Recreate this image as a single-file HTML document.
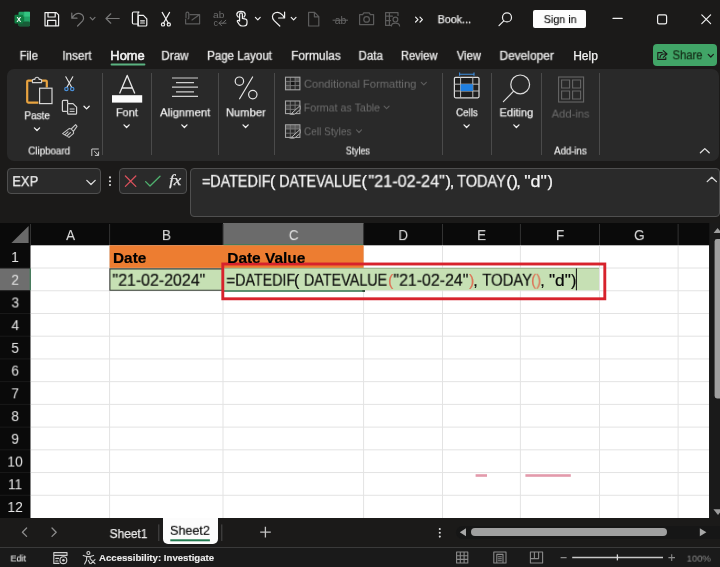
<!DOCTYPE html>
<html lang="en"><head><meta charset="utf-8"><title>Book1 - Excel</title>
<style>
html,body{margin:0;padding:0;background:#1b1a19;}
#app{position:relative;width:720px;height:567px;overflow:hidden;background:#1b1a19;font-family:"Liberation Sans",sans-serif;}
#app div,#app section,#app header,#app footer,#app nav{position:absolute;box-sizing:border-box;}
.t{position:absolute;white-space:pre;line-height:1;transform-origin:0 0;will-change:transform;}
svg{position:absolute;left:0;top:0;overflow:visible;will-change:transform;}
.w{fill:none;stroke:#f0f0f0;stroke-width:1.2;stroke-linecap:round;stroke-linejoin:round;}
.g{fill:none;stroke:#777;stroke-width:1.2;stroke-linecap:round;stroke-linejoin:round;}
.d{fill:none;stroke:#5c5c5c;stroke-width:1.2;stroke-linecap:round;stroke-linejoin:round;}
.sep{background:#4a4a4a;width:1px;top:73px;height:82px;}
</style></head>
<body><div id="app">

<header style="left:0;top:0;width:720px;height:69px;background:#1b1a19">
<svg width="720" height="69" viewBox="0 0 720 69">
 <rect x="18.5" y="11.8" width="11.5" height="14.4" rx="1.3" fill="#21a366"/>
 <rect x="24.2" y="11.8" width="5.8" height="4.8" fill="#33c481"/>
 <rect x="18.5" y="16.6" width="5.7" height="4.8" fill="#107c41"/>
 <rect x="18.5" y="21.4" width="11.5" height="4.8" rx="1.3" fill="#185c37"/>
 <rect x="14.5" y="14.8" width="8.6" height="8.6" rx="1" fill="#107c41"/>
 <text x="18.8" y="22" font-family="Liberation Sans, sans-serif" font-size="7" font-weight="700" fill="#fff" text-anchor="middle">X</text>
 <path class="w" d="M45 12.6 H56.3 L58.6 14.9 V25.8 H45 Z"/>
 <path class="w" d="M48 12.8 V17 H55.2 V12.8 M47.6 25.6 V20.4 H55.8 V25.6"/>
 <path class="g" d="M71.8 13 V18.2 H77 M72 18 C74 14.8 77.2 13 80 13.6 C83.4 14.4 84.6 18 82.6 20.8 L77.6 26"/>
 <path class="g" style="stroke-width:1.2" d="M90.20 17.40 L92.60 19.80 L95.00 17.40"/>
 <path class="g" d="M119.2 18.5 H106.2 M110.8 13.8 L106 18.5 L110.8 23.2"/>
 <path class="w" d="M137.4 24 H133.6 Q132.4 24 132.4 22.8 V13.2 Q132.4 12 133.6 12 H138.6"/>
 <path class="w" d="M138 26 V13 Q138 12 139 12 V12"/>
 <path class="w" d="M139 15.4 H143.4 L146.8 18.8 V25 Q146.8 26 145.8 26 H139.4 Q138.2 26 138.2 25 V16.4 Q138.2 15.4 139 15.4 Z" fill="#1b1a19"/>
 <path class="w" d="M140.6 20.8 H144.4 M140.6 23 H144.4"/>
 <path class="w" d="M162.2 12.4 L168.2 23 M169.6 12.4 L163.6 23"/>
 <circle class="w" cx="163" cy="24.4" r="1.6"/><circle class="w" cx="168.8" cy="24.4" r="1.6"/>
 <path class="d" d="M190 14.6 H199.6 V23.8 H185.6 V19.4 M192 20 L199.4 14.8"/>
 <path class="d" d="M186 17.8 V13.6 Q186 12.2 187.4 12.2 Q188.8 12.2 188.8 13.6 V18 Q188.8 18.8 188 18.8"/>
 <text x="213" y="18.4" font-family="Liberation Sans, sans-serif" font-size="9" fill="#6c6c6c" textLength="11.4" lengthAdjust="spacingAndGlyphs">ab</text>
 <text x="213.4" y="26" font-family="Liberation Sans, sans-serif" font-size="9" fill="#6c6c6c">c</text>
 <path class="d" style="stroke:#6c6c6c;stroke-width:1" d="M225.8 20.2 L222.6 23.2 H226 M222.6 23.2 H219 M221.6 20.8 L219 23.2 L221.6 25.8"/>
 <path class="w" d="M239.6 21 V14.4 Q239.6 12.8 241 12.8 Q242.4 12.8 242.4 14.4 V18.4 L245.6 19.2 Q247 19.6 247 21 V23 Q247 26 244 26 H242 Q240.4 26 239.4 24.6 L237.4 21.6 Q237 20.6 238 20.4 Q238.8 20.2 239.6 21"/>
 <path class="w" d="M238.2 17 Q236.6 15.6 236.8 14 Q237.4 11.4 241 11.4 Q244.6 11.4 245.2 14 Q245.4 15.6 244 17"/>
 <path class="w" style="stroke-width:1.2" d="M255.40 17.40 L257.80 19.80 L260.20 17.40"/>
 <path class="w" d="M284.6 12 V18 H278.6 M284.4 17.8 C282.4 13.6 278.4 11.6 275.2 12.8 C271.8 14.2 271.6 18 274.2 20.6 L279.8 26"/>
 <path class="w" style="stroke-width:1.2" d="M291.20 17.40 L293.60 19.80 L296.00 17.40"/>
 <path class="d" d="M308.6 12.4 H314.6 L318.8 16.6 V26 H308.6 Z M314.4 12.6 V16.8 H318.6"/>
 <text x="334.8" y="23.6" font-family="Liberation Sans, sans-serif" font-size="10.4" fill="#666">ab</text>
 <path class="d" style="stroke:#666;stroke-width:1" d="M333 20.2 H347.6"/>
 <path class="d" d="M359.6 14.6 H362.6 L363.8 12.8 H369.2 L370.4 14.6 H373.6 V24.6 H359.6 Z"/>
 <circle class="d" cx="366.6" cy="19.4" r="2.8"/>
 <path class="d" d="M385.6 12.6 H398 V15.4 M385.6 12.6 V25.4 H390.6 M385.6 16.2 H392.4 M385.6 20.6 H390.6 M389.4 12.6 V25.4"/>
 <circle class="d" cx="395.4" cy="19.6" r="2.4"/>
 <path class="d" d="M391.4 26 Q391.6 23.2 395.4 23.2 Q399.2 23.2 399.6 26"/>
 <path class="w" d="M415.6 17.2 L418 19.6 L415.6 22 M420 17.2 L422.4 19.6 L420 22"/>
 <circle class="w" cx="507" cy="17.4" r="4.5"/>
 <path class="w" d="M503.8 20.8 L499 25.6"/>
 <path class="w" d="M613 18.4 H622.2"/>
 <rect class="w" x="657.6" y="14.8" width="9" height="9" rx="1.6"/>
 <path class="w" d="M701.8 14.8 L710.6 23.6 M710.6 14.8 L701.8 23.6"/>
</svg>
<span class="t" style="left:437px;top:14px;font-size:11.3px;color:#ededed;-webkit-text-stroke:0.25px currentColor;transform:translate(0.73px,0.10px) scaleX(0.9459);">Book...</span>
<div style="left:533px;top:10px;width:53px;height:18px;background:#fdfdfd;border-radius:2px"></div>
<span class="t" style="left:543px;top:14px;font-size:11.5px;color:#050505;-webkit-text-stroke:0.1px currentColor;transform:translate(0.73px,0.10px) scaleX(0.9353);">Sign in</span>
<nav style="left:0;top:40px;width:720px;height:29px">

<div style="left:653px;top:3.6px;width:64px;height:22px;background:#41a567;border-radius:4px"></div>
</nav>
<span class="t" style="left:19px;top:49px;font-size:12px;color:#f2f2f2;-webkit-text-stroke:0.25px currentColor;transform:translate(0.63px,0.80px) scaleX(0.9437);">File</span><span class="t" style="left:62px;top:49px;font-size:12px;color:#f2f2f2;-webkit-text-stroke:0.25px currentColor;transform:translate(0.30px,0.80px) scaleX(0.9741);">Insert</span><span class="t" style="left:110px;top:49px;font-size:12px;color:#f2f2f2;-webkit-text-stroke:0.55px currentColor;transform:translate(0.35px,0.80px) scaleX(1.0705);">Home</span><span class="t" style="left:161px;top:49px;font-size:12px;color:#f2f2f2;-webkit-text-stroke:0.25px currentColor;transform:translate(0.30px,0.80px) scaleX(0.9722);">Draw</span><span class="t" style="left:207px;top:49px;font-size:12px;color:#f2f2f2;-webkit-text-stroke:0.25px currentColor;transform:translate(0.11px,0.80px) scaleX(0.9608);">Page Layout</span><span class="t" style="left:291px;top:49px;font-size:12px;color:#f2f2f2;-webkit-text-stroke:0.25px currentColor;transform:translate(0.18px,0.80px) scaleX(0.9907);">Formulas</span><span class="t" style="left:358px;top:49px;font-size:12px;color:#f2f2f2;-webkit-text-stroke:0.25px currentColor;transform:translate(0.52px,0.80px) scaleX(0.9571);">Data</span><span class="t" style="left:400px;top:49px;font-size:12px;color:#f2f2f2;-webkit-text-stroke:0.25px currentColor;transform:translate(0.95px,0.80px) scaleX(0.9268);">Review</span><span class="t" style="left:456px;top:49px;font-size:12px;color:#f2f2f2;-webkit-text-stroke:0.25px currentColor;transform:translate(0.78px,0.80px) scaleX(0.9340);">View</span><span class="t" style="left:499px;top:49px;font-size:12px;color:#f2f2f2;-webkit-text-stroke:0.25px currentColor;transform:translate(0.48px,0.80px) scaleX(0.9953);">Developer</span><span class="t" style="left:573px;top:49px;font-size:12px;color:#f2f2f2;-webkit-text-stroke:0.25px currentColor;transform:translate(0.17px,0.80px) scaleX(1.0043);">Help</span>
<span class="t" style="left:672px;top:48px;font-size:13px;color:#10200f;-webkit-text-stroke:0.1px currentColor;transform:translate(0.55px,0.30px) scaleX(0.8602);">Share</span>
<svg width="720" height="69" viewBox="0 0 720 69"><rect x="110.6" y="63.5" width="34.8" height="1.9" rx="0.9" fill="#5bb381"/><path d="M708.2 54.4 L710.8 57 L713.4 54.4" fill="none" stroke="#1b1a19" stroke-width="1.2" stroke-linecap="round" stroke-linejoin="round"/>
 <path d="M663.2 50.6 L667 54 L663.2 57.4 M667 54 H664 Q660.4 54 660 57.6 M662.2 52.6 H657.8 V59.4 H665.8 V57.6" fill="none" stroke="#1b1a19" stroke-width="1.1" stroke-linejoin="round" stroke-linecap="round"/></svg>
</header>


<section style="left:7px;top:69px;width:712px;height:92px;background:#292929;border-radius:7px"></section>
<section style="left:0;top:69px;width:720px;height:92px">
<div class="sep" style="left:102px;top:4px"></div><div class="sep" style="left:151px;top:4px"></div><div class="sep" style="left:218px;top:4px"></div><div class="sep" style="left:274px;top:4px"></div><div class="sep" style="left:442px;top:4px"></div><div class="sep" style="left:491px;top:4px"></div><div class="sep" style="left:541px;top:4px"></div><div class="sep" style="left:599px;top:4px"></div>
<svg width="720" height="92" viewBox="0 69 720 92">
 <path d="M33.4 80.6 H28.2 Q27.2 80.6 27.2 81.6 V101.6 Q27.2 102.6 28.2 102.6 H38.4" fill="none" stroke="#e9a440" stroke-width="2.2" stroke-linejoin="round"/>
 <path d="M40.6 80.6 H45.8 Q46.8 80.6 46.8 81.6 V87.4" fill="none" stroke="#e9a440" stroke-width="2.2" stroke-linejoin="round"/>
 <path d="M32.4 82.6 V80.4 Q32.4 79.4 33.4 79.4 H34.8 Q35 77.2 37 77.2 Q39 77.2 39.2 79.4 H40.6 Q41.6 79.4 41.6 80.4 V82.6 Z" fill="#292929" stroke="#d0d0d0" stroke-width="1.1" stroke-linejoin="round"/>
 <rect x="39.6" y="88.2" width="12.4" height="15.4" fill="#292929" stroke="#d8d8d8" stroke-width="1.2"/>
 <path class="w" style="stroke-width:1.3" d="M34.40 127.90 L37.00 130.50 L39.60 127.90"/>
 <path d="M65.8 76.8 L71.8 87.6 M72.8 76.8 L66.8 87.6" fill="none" stroke="#e6e6e6" stroke-width="1.1" stroke-linecap="round"/>
 <circle cx="66.4" cy="89" r="1.7" fill="none" stroke="#4a90d9" stroke-width="1.2"/><circle cx="72.2" cy="89" r="1.7" fill="none" stroke="#4a90d9" stroke-width="1.2"/>
 <path class="w" style="stroke:#d4d4d4" d="M66.4 111.4 H63.4 Q62.4 111.4 62.4 110.4 V101.4 Q62.4 100.4 63.4 100.4 H67.6 V103"/>
 <path class="w" style="stroke:#d4d4d4" d="M68.2 103.6 H73 L76.6 107.2 V113.2 Q76.6 114.2 75.6 114.2 H68.6 Q67.6 114.2 67.6 113.2 V104.2 Q67.6 103.6 68.2 103.6 Z"/>
 <path class="w" style="stroke:#d4d4d4;stroke-width:1" d="M70 109 H74.2 M70 111.4 H74.2"/>
 <path class="w" style="stroke-width:1.3" d="M84.00 106.30 L86.60 108.90 L89.20 106.30"/>
 <path class="w" style="stroke:#c4c4c4;stroke-width:1.1" d="M75.6 124.6 L71.2 129 L73.4 131.4 L77 126.4 Z M71.2 129 L69.4 128.4 L62.6 133.6 L69 137.4 L73.6 133.4 L73.4 131.4 M64.8 134.8 L68 131.8 M66.8 136 L70.4 132.6"/>
 <path class="w" style="stroke:#c8c8c8;stroke-width:1" d="M98.4 149 H91.8 V155.6 M94.4 151.2 L98.4 155.2 M98.6 152 V155.4 H95.2"/>
 <path d="M119.6 93.6 L127.2 75.4 L134.8 93.6 M122.2 88 H132.2" fill="none" stroke="#e8e8e8" stroke-width="1.3" stroke-linejoin="round"/>
 <rect x="112" y="95.2" width="30.2" height="7.4" fill="#fbfbfb"/>
 <path class="w" style="stroke-width:1.3" d="M124.00 124.90 L126.60 127.50 L129.20 124.90"/>
 <path d="M172 78 H198 M176 82.6 H194 M172 87.2 H198 M176 91.8 H194 M172 96.4 H198" fill="none" stroke="#d0d0d0" stroke-width="1.2"/>
 <path class="w" style="stroke-width:1.3" d="M181.80 124.90 L184.40 127.50 L187.00 124.90"/>
 <circle cx="239.4" cy="81.2" r="4.2" fill="none" stroke="#e4e4e4" stroke-width="1.2"/>
 <circle cx="252.8" cy="94.6" r="4.2" fill="none" stroke="#e4e4e4" stroke-width="1.2"/>
 <path d="M252.6 77 L239.6 98.8" fill="none" stroke="#e4e4e4" stroke-width="1.2" stroke-linecap="round"/>
 <path class="w" style="stroke-width:1.3" d="M243.00 124.90 L245.60 127.50 L248.20 124.90"/>
 <rect x="290.3" y="81.4" width="4.8" height="4.2" fill="#141414"/><rect x="295.1" y="77.2" width="4.8" height="4.2" fill="#505050"/><rect x="285.5" y="85.60000000000001" width="4.8" height="4.2" fill="#484848"/><rect x="285.5" y="81.4" width="4.8" height="4.2" fill="#3c3c3c"/><path d="M285.5 81.4 H299.9 M285.5 85.60000000000001 H299.9 M290.3 77.2 V89.8 M295.1 77.2 V89.8" fill="none" stroke="#7c7c7c" stroke-width="0.9"/><rect x="285.5" y="77.2" width="14.4" height="12.6" fill="none" stroke="#a4a4a4" stroke-width="1.1"/><rect x="285.5" y="105.2" width="4.8" height="4.2" fill="#444"/><path d="M285.5 105.2 H299.9 M285.5 109.4 H299.9 M290.3 101 V113.6 M295.1 101 V113.6" fill="none" stroke="#7c7c7c" stroke-width="0.9"/><rect x="285.5" y="101" width="14.4" height="12.6" fill="none" stroke="#a4a4a4" stroke-width="1.1"/><path d="M290.9 114.0 L300.1 105.6 L300.1 109.6 L294.9 114.0 Z" fill="#2e2e2e" stroke="#b4b4b4" stroke-width="1" stroke-linejoin="round"/><path d="M289.1 114.8 L294.3 114.8 L292.7 112.39999999999999 Z" fill="#a8a8a8"/><rect x="286.0" y="125.3" width="13.4" height="3.7" fill="#5a5a5a"/><path d="M285.5 129.0 H299.9 M285.5 133.2 H299.9 M290.3 124.8 V137.4 M295.1 124.8 V137.4" fill="none" stroke="#7c7c7c" stroke-width="0.9"/><rect x="285.5" y="124.8" width="14.4" height="12.6" fill="none" stroke="#a4a4a4" stroke-width="1.1"/><path d="M290.9 137.8 L300.1 129.4 L300.1 133.4 L294.9 137.8 Z" fill="#2e2e2e" stroke="#b4b4b4" stroke-width="1" stroke-linejoin="round"/><path d="M289.1 138.6 L294.3 138.6 L292.7 136.20000000000002 Z" fill="#a8a8a8"/>
 <path class="d" style="stroke-width:1.2" d="M421.30 82.30 L423.80 84.90 L426.30 82.30"/><path class="d" style="stroke-width:1.2" d="M384.10 106.10 L386.60 108.70 L389.10 106.10"/><path class="d" style="stroke-width:1.2" d="M356.50 129.90 L359.00 132.50 L361.50 129.90"/>
 <path d="M459.6 72.6 V75.8 M474 72.6 V75.8 M459.6 74.2 H474" fill="none" stroke="#3d8ee0" stroke-width="1.1"/>
 <rect x="454.4" y="77.4" width="24.6" height="20.4" rx="1.2" fill="#1e1e1e" stroke="#dcdcdc" stroke-width="1.2"/>
 <path d="M454.4 84.2 H479 M454.4 91 H479 M460.6 77.4 V97.8 M472.8 77.4 V97.8" fill="none" stroke="#bdbdbd" stroke-width="1"/>
 <rect x="460.6" y="84.2" width="12.2" height="6.8" fill="#1f7fe0"/>
 <path class="w" style="stroke-width:1.3" d="M464.00 124.90 L466.60 127.50 L469.20 124.90"/>
 <circle cx="520.2" cy="84.4" r="9.4" fill="none" stroke="#dcdcdc" stroke-width="1.2"/>
 <path d="M513.4 91.4 L503.4 101.6" fill="none" stroke="#dcdcdc" stroke-width="1.2" stroke-linecap="round"/>
 <path class="w" style="stroke-width:1.3" d="M513.80 124.90 L516.40 127.50 L519.00 124.90"/>
 <rect x="558.6" y="77" width="25" height="25" fill="none" stroke="#666" stroke-width="1.1"/>
 <path d="M561.6 80 H569.6 V88 H561.6 Z M572.6 80 H580.6 V88 H572.6 Z M561.6 91 H569.6 V99 H561.6 Z M572.6 91 H580.6 V99 H572.6 Z" fill="none" stroke="#666" stroke-width="1.1"/>
 <path class="w" style="stroke:#e0e0e0;stroke-width:1.3" d="M700.4 152.8 L704.8 148.6 L709.2 152.8"/>
</svg>
<span class="t" style="left:24px;top:40px;font-size:11.6px;color:#f2f2f2;-webkit-text-stroke:0.25px currentColor;transform:translate(0.42px,0.20px) scaleX(0.8584);">Paste</span>
<span class="t" style="left:28px;top:77px;font-size:10px;color:#f2f2f2;-webkit-text-stroke:0.15px currentColor;transform:translate(0.24px,0.50px) scaleX(0.9760);">Clipboard</span>
<span class="t" style="left:115px;top:37px;font-size:11.6px;color:#f2f2f2;-webkit-text-stroke:0.25px currentColor;transform:translate(0.93px,0.20px) scaleX(0.9416);">Font</span>
<span class="t" style="left:160px;top:37px;font-size:11.6px;color:#f2f2f2;-webkit-text-stroke:0.25px currentColor;transform:translate(0.07px,0.20px) scaleX(0.9718);">Alignment</span>
<span class="t" style="left:225px;top:37px;font-size:11.6px;color:#f2f2f2;-webkit-text-stroke:0.25px currentColor;transform:translate(0.91px,0.20px) scaleX(0.9662);">Number</span>
<span class="t" style="left:303px;top:9px;font-size:11.5px;color:#6e6e6e;transform:translate(0.86px,0.70px) scaleX(0.9721);">Conditional Formatting</span>
<span class="t" style="left:303px;top:33px;font-size:11.5px;color:#6e6e6e;transform:translate(0.72px,0.50px) scaleX(0.9288);">Format as Table</span>
<span class="t" style="left:303px;top:57px;font-size:11.5px;color:#6e6e6e;transform:translate(0.91px,0.30px) scaleX(0.8766);">Cell Styles</span>
<span class="t" style="left:345px;top:77px;font-size:10px;color:#f2f2f2;-webkit-text-stroke:0.15px currentColor;transform:translate(0.78px,0.50px) scaleX(0.8811);">Styles</span>
<span class="t" style="left:456px;top:37px;font-size:11.6px;color:#f2f2f2;-webkit-text-stroke:0.25px currentColor;transform:translate(0.05px,0.20px) scaleX(0.8420);">Cells</span>
<span class="t" style="left:499px;top:37px;font-size:11.6px;color:#f2f2f2;-webkit-text-stroke:0.25px currentColor;transform:translate(0.53px,0.20px) scaleX(0.9496);">Editing</span>
<span class="t" style="left:551px;top:38px;font-size:11.6px;color:#6a6a6a;transform:translate(0.65px,0.60px) scaleX(0.9641);">Add-ins</span>
<span class="t" style="left:554px;top:77px;font-size:10px;color:#f2f2f2;-webkit-text-stroke:0.15px currentColor;transform:translate(0.13px,0.50px) scaleX(0.9597);">Add-ins</span>
</section>


<section style="left:0;top:161px;width:720px;height:62px;background:#1b1a19">
<div style="left:7px;top:7px;width:94px;height:26.4px;background:#2a2a2a;border:1px solid #4f4f4f;border-radius:4px"></div>
<div style="left:119px;top:7px;width:68px;height:26.4px;background:#2a2a2a;border:1px solid #4f4f4f;border-radius:4px"></div>
<div style="left:190px;top:7px;width:529.5px;height:49px;background:#2a2a2a;border:1px solid #4f4f4f;border-radius:4px"></div>
<svg width="720" height="62" viewBox="0 161 720 62">
 <path class="w" style="stroke:#dcdcdc;stroke-width:1.3" d="M86.8 180.4 L91 184.5 L95.2 180.4"/>
 <circle cx="110" cy="177.4" r="1.05" fill="#dcdcdc"/><circle cx="110" cy="181.2" r="1.05" fill="#dcdcdc"/><circle cx="110" cy="185" r="1.05" fill="#dcdcdc"/>
 <path d="M125.4 176 L135.8 186.4 M135.8 176 L125.4 186.4" fill="none" stroke="#d9515c" stroke-width="1.3" stroke-linecap="round"/>
 <path d="M145.6 181.6 L150 186 L160 176.2" fill="none" stroke="#4fb06e" stroke-width="1.3" stroke-linecap="round" stroke-linejoin="round"/>
 <path class="w" style="stroke:#dcdcdc;stroke-width:1.3" d="M707.2 181.6 L711.8 177.2 L716.4 181.6"/>
</svg>
<span class="t" style="left:12px;top:13px;font-size:14.8px;color:#f2f2f2;-webkit-text-stroke:0.25px currentColor;transform:translate(0.28px,0.10px) scaleX(0.8782);">EXP</span>
<span class="t" style="left:169px;top:11px;font-size:15.5px;color:#e6e6e6;font-style:italic;font-family:'Liberation Serif', serif;-webkit-text-stroke:0.25px currentColor;transform:translate(0.20px,0.40px) scaleX(1.0837);">fx</span>
<span class="t" style="left:201px;top:11px;font-size:16.3px;color:#f4f4f4;-webkit-text-stroke:0.25px currentColor;transform:translate(0.95px,0.80px) scaleX(0.9062);">=</span><span class="t" style="left:210px;top:11px;font-size:16.3px;color:#f4f4f4;-webkit-text-stroke:0.25px currentColor;transform:translate(0.22px,0.80px) scaleX(0.8820);">DATEDIF</span><span class="t" style="left:270px;top:11px;font-size:16.3px;color:#f4f4f4;-webkit-text-stroke:0.25px currentColor;transform:translate(0.02px,0.80px) scaleX(1.0000);">( </span><span class="t" style="left:279px;top:11px;font-size:16.3px;color:#f4f4f4;-webkit-text-stroke:0.25px currentColor;transform:translate(0.24px,0.80px) scaleX(0.8719);">DATEVALUE</span><span class="t" style="left:361px;top:11px;font-size:16.3px;color:#f4f4f4;-webkit-text-stroke:0.25px currentColor;transform:translate(0.48px,0.80px) scaleX(1.0000);">(</span><span class="t" style="left:368px;top:11px;font-size:16.3px;color:#f4f4f4;-webkit-text-stroke:0.25px currentColor;transform:translate(0.48px,0.80px) scaleX(0.9960);">"21-02-24"</span><span class="t" style="left:445px;top:11px;font-size:16.3px;color:#f4f4f4;-webkit-text-stroke:0.25px currentColor;transform:translate(0.38px,0.80px) scaleX(1.0000);">)</span><span class="t" style="left:449px;top:11px;font-size:16.3px;color:#f4f4f4;-webkit-text-stroke:0.25px currentColor;transform:translate(0.65px,0.80px) scaleX(1.0000);">, </span><span class="t" style="left:457px;top:11px;font-size:16.3px;color:#f4f4f4;-webkit-text-stroke:0.25px currentColor;transform:translate(0.10px,0.80px) scaleX(0.8917);">TODAY</span><span class="t" style="left:506px;top:11px;font-size:16.3px;color:#f4f4f4;-webkit-text-stroke:0.25px currentColor;transform:translate(0.13px,0.80px) scaleX(1.0914);">()</span><span class="t" style="left:516px;top:11px;font-size:16.3px;color:#f4f4f4;-webkit-text-stroke:0.25px currentColor;transform:translate(0.25px,0.80px) scaleX(1.0000);">, </span><span class="t" style="left:524px;top:11px;font-size:16.3px;color:#f4f4f4;-webkit-text-stroke:0.25px currentColor;transform:translate(0.20px,0.80px) scaleX(1.1039);">"d"</span><span class="t" style="left:547px;top:11px;font-size:16.3px;color:#f4f4f4;-webkit-text-stroke:0.25px currentColor;transform:translate(0.48px,0.80px) scaleX(1.0000);">)</span>
</section>


<section style="left:0;top:223px;width:720px;height:295px;background:#0a0a0a">
<svg width="720" height="295" viewBox="0 223 720 295">
 <rect x="30.5" y="245.3" width="678.7" height="272.7" fill="#fff"/>
 <rect x="709.2" y="223" width="10.8" height="295" fill="#1a1a1a"/>
 <path d="M11.4 243 L28.6 226 V243 Z" fill="#6a6a6a"/>
 <rect x="223" y="223" width="140.6" height="22" fill="#6b6b6b"/>
 <rect x="223" y="244.2" width="140.6" height="1.2" fill="#3f7d57"/>
 <rect x="0" y="268" width="30.5" height="22.75" fill="#6e6e6e"/>
 <rect x="29.6" y="268" width="1.2" height="22.75" fill="#3f7d57"/>
 <path d="M30.50 224 V245.3 M109.60 224 V245.3 M223.00 224 V245.3 M363.60 224 V245.3 M442.50 224 V245.3 M520.40 224 V245.3 M599.50 224 V245.3 M678.10 224 V245.3 " stroke="#333" stroke-width="1" fill="none"/>
 <path d="M0 268.03 H30.5 M0 290.75 H30.5 M0 313.48 H30.5 M0 336.20 H30.5 M0 358.93 H30.5 M0 381.65 H30.5 M0 404.38 H30.5 M0 427.10 H30.5 M0 449.83 H30.5 M0 472.55 H30.5 M0 495.28 H30.5 " stroke="#1a1a1a" stroke-width="1" fill="none"/>
 <path d="M109.60 245.3 V518 M223.00 245.3 V518 M363.60 245.3 V518 M442.50 245.3 V518 M520.40 245.3 V518 M599.50 245.3 V518 M678.10 245.3 V518 M30.5 268.03 H709 M30.5 290.75 H709 M30.5 313.48 H709 M30.5 336.20 H709 M30.5 358.93 H709 M30.5 381.65 H709 M30.5 404.38 H709 M30.5 427.10 H709 M30.5 449.83 H709 M30.5 472.55 H709 M30.5 495.28 H709 " stroke="#e3e3e3" stroke-width="1" fill="none"/>
 <rect x="109.6" y="245.3" width="254" height="22.6" fill="#ed7d31"/>
 <rect x="110" y="268.6" width="113" height="21.8" fill="#c6e0b4"/>
 <path d="M222 268.9 H109.9 V290.3 H222" fill="none" stroke="#3a3f38" stroke-width="1.1"/>
 <rect x="223.6" y="268.1" width="375.4" height="22.2" fill="#c6e0b4"/>
 <path d="M224.3 268.3 H599" stroke="#8aa37a" stroke-width="0.8" fill="none"/>
 <path d="M223 290.9 H364" stroke="#2c7049" stroke-width="1.5" fill="none"/>
 <rect x="362.4" y="290" width="2.6" height="2" fill="#33503d"/>
 <rect x="575.9" y="268.4" width="1" height="21.9" fill="#111"/>
 <rect x="475.6" y="474.2" width="11.4" height="2.6" fill="#e39aab"/>
 <rect x="525.4" y="474.2" width="45.4" height="2.6" fill="#e39aab"/>
 <rect x="222.8" y="264" width="382" height="34.8" fill="none" stroke="#d7222c" stroke-width="2.9"/>
 <path d="M713.6 233 L717.6 228 L721.6 233 Z" fill="#9c9c9c"/>
 <rect x="714.6" y="239" width="8" height="159.4" rx="2.4" fill="#a0a0a0"/>
 <path d="M713.4 509.3 L718 515 L722.6 509.3 Z" fill="#9c9c9c"/>
</svg>
<span class="t" style="left:66px;top:6px;font-size:13.8px;color:#e6e6e6;transform:translate(0.09px,0.10px) scaleX(0.9700);">A</span><span class="t" style="left:161px;top:6px;font-size:13.8px;color:#e6e6e6;transform:translate(0.97px,0.10px) scaleX(0.9700);">B</span><span class="t" style="left:288px;top:6px;font-size:13.8px;color:#e6e6e6;transform:translate(0.85px,0.10px) scaleX(0.9700);">C</span><span class="t" style="left:398px;top:6px;font-size:13.8px;color:#e6e6e6;transform:translate(0.36px,0.10px) scaleX(0.9700);">D</span><span class="t" style="left:477px;top:6px;font-size:13.8px;color:#e6e6e6;transform:translate(0.12px,0.10px) scaleX(0.9700);">E</span><span class="t" style="left:555px;top:6px;font-size:13.8px;color:#e6e6e6;transform:translate(0.99px,0.10px) scaleX(0.9700);">F</span><span class="t" style="left:634px;top:6px;font-size:13.8px;color:#e6e6e6;transform:translate(0.11px,0.10px) scaleX(0.9700);">G</span>
<span class="t" style="left:11px;top:27px;font-size:14.2px;color:#e6e6e6;transform:translate(0.20px,0.00px) scaleX(0.9700);">1</span><span class="t" style="left:11px;top:49px;font-size:14.2px;color:#e6e6e6;transform:translate(0.32px,0.73px) scaleX(0.9700);">2</span><span class="t" style="left:11px;top:72px;font-size:14.2px;color:#e6e6e6;transform:translate(0.44px,0.45px) scaleX(0.9700);">3</span><span class="t" style="left:11px;top:95px;font-size:14.2px;color:#e6e6e6;transform:translate(0.44px,0.18px) scaleX(0.9700);">4</span><span class="t" style="left:11px;top:117px;font-size:14.2px;color:#e6e6e6;transform:translate(0.32px,0.90px) scaleX(0.9700);">5</span><span class="t" style="left:11px;top:140px;font-size:14.2px;color:#e6e6e6;transform:translate(0.32px,0.62px) scaleX(0.9700);">6</span><span class="t" style="left:11px;top:163px;font-size:14.2px;color:#e6e6e6;transform:translate(0.32px,0.35px) scaleX(0.9700);">7</span><span class="t" style="left:11px;top:186px;font-size:14.2px;color:#e6e6e6;transform:translate(0.32px,0.07px) scaleX(0.9700);">8</span><span class="t" style="left:11px;top:208px;font-size:14.2px;color:#e6e6e6;transform:translate(0.32px,0.80px) scaleX(0.9700);">9</span><span class="t" style="left:7px;top:231px;font-size:14.2px;color:#e6e6e6;transform:translate(0.32px,0.53px) scaleX(0.9700);">10</span><span class="t" style="left:7px;top:254px;font-size:14.2px;color:#e6e6e6;transform:translate(0.92px,0.25px) scaleX(0.9700);">11</span><span class="t" style="left:7px;top:276px;font-size:14.2px;color:#e6e6e6;transform:translate(0.44px,0.98px) scaleX(0.9700);">12</span>
<span class="t" style="left:113px;top:26px;font-size:15px;color:#000;font-weight:700;-webkit-text-stroke:0.2px currentColor;transform:translate(0.03px,0.60px) scaleX(1.0226);">Date</span>
<span class="t" style="left:227px;top:26px;font-size:15px;color:#000;font-weight:700;-webkit-text-stroke:0.2px currentColor;transform:translate(0.22px,0.60px) scaleX(1.0303);">Date Value</span>
<span class="t" style="left:112px;top:49px;font-size:16px;color:#0a0a0a;-webkit-text-stroke:0.2px currentColor;transform:translate(0.50px,0.70px) scaleX(0.9951);">"21-02-2024"</span>
<span class="t" style="left:226px;top:49px;font-size:16px;color:#0a0a0a;-webkit-text-stroke:0.2px currentColor;transform:translate(0.28px,0.70px) scaleX(0.9548);">=</span><span class="t" style="left:235px;top:49px;font-size:16px;color:#0a0a0a;-webkit-text-stroke:0.2px currentColor;transform:translate(0.19px,0.70px) scaleX(0.8916);">DATEDIF</span><span class="t" style="left:294px;top:49px;font-size:16px;color:#0a0a0a;-webkit-text-stroke:0.2px currentColor;transform:translate(0.05px,0.70px) scaleX(1.0000);">( </span><span class="t" style="left:303px;top:49px;font-size:16px;color:#0a0a0a;-webkit-text-stroke:0.2px currentColor;transform:translate(0.88px,0.70px) scaleX(0.8981);">DATEVALUE</span><span class="t" style="left:387px;top:49px;font-size:16px;color:#dd7357;-webkit-text-stroke:0.2px currentColor;transform:translate(0.90px,0.70px) scaleX(1.0000);">(</span><span class="t" style="left:393px;top:49px;font-size:16px;color:#0a0a0a;-webkit-text-stroke:0.2px currentColor;transform:translate(0.46px,0.70px) scaleX(0.9932);">"21-02-24"</span><span class="t" style="left:468px;top:49px;font-size:16px;color:#dd7357;-webkit-text-stroke:0.2px currentColor;transform:translate(0.90px,0.70px) scaleX(1.0000);">)</span><span class="t" style="left:473px;top:49px;font-size:16px;color:#0a0a0a;-webkit-text-stroke:0.2px currentColor;transform:translate(0.15px,0.70px) scaleX(1.0000);">, </span><span class="t" style="left:482px;top:49px;font-size:16px;color:#0a0a0a;-webkit-text-stroke:0.2px currentColor;transform:translate(0.27px,0.70px) scaleX(0.9264);">TODAY</span><span class="t" style="left:531px;top:49px;font-size:16px;color:#dd7357;-webkit-text-stroke:0.2px currentColor;transform:translate(0.05px,0.70px) scaleX(0.9486);">()</span><span class="t" style="left:540px;top:49px;font-size:16px;color:#0a0a0a;-webkit-text-stroke:0.2px currentColor;transform:translate(0.35px,0.70px) scaleX(1.0000);">, </span><span class="t" style="left:548px;top:49px;font-size:16px;color:#0a0a0a;-webkit-text-stroke:0.2px currentColor;transform:translate(0.89px,0.70px) scaleX(1.0827);">"d"</span><span class="t" style="left:570px;top:49px;font-size:16px;color:#0a0a0a;-webkit-text-stroke:0.2px currentColor;transform:translate(0.95px,0.70px) scaleX(1.0000);">)</span>
</section>


<footer style="left:0;top:518px;width:720px;height:49px;background:#1a1a1a">
<div style="left:0;top:0;width:162.5px;height:29px;background:#1b1a19;border-radius:0 5px 0 0"></div>
<div style="left:218px;top:0;width:502px;height:29px;background:#1b1a19;border-radius:5px 0 0 0"></div>
<div style="left:162.5px;top:0;width:55.5px;height:26px;background:#fcfcfc;border-radius:0 0 5px 5px"></div>

<div style="left:0;top:29px;width:720px;height:1px;background:#3a3a3a"></div>
<div style="left:456px;top:8px;width:264px;height:13.4px;background:#161616;border-radius:7px 0 0 7px"></div>
<div style="left:470.8px;top:10.2px;width:196px;height:8px;background:#a0a0a0;border-radius:4px"></div>
<svg width="720" height="49" viewBox="0 518 720 49">
 <rect x="170.3" y="539.3" width="39.6" height="2" fill="#217a4f"/>
 <path class="g" style="stroke:#8c8c8c;stroke-width:1.3" d="M26.6 528 L22.4 532.2 L26.6 536.4 M52 528 L56.2 532.2 L52 536.4"/>
 <path d="M158.8 524.4 V541 M221.8 524.4 V541" stroke="#4a4a4a" stroke-width="1" fill="none"/>
 <path d="M265.4 526.8 V537.4 M260.2 532.1 H270.8" stroke="#c4c4c4" stroke-width="1.3" fill="none"/>
 <circle cx="439.8" cy="529" r="1.05" fill="#dcdcdc"/><circle cx="439.8" cy="532.8" r="1.05" fill="#dcdcdc"/><circle cx="439.8" cy="536.6" r="1.05" fill="#dcdcdc"/>
 <path d="M466 528.2 V536.2 L459.8 532.2 Z" fill="#a8a8a8"/>
 <path d="M699.8 528.2 V536.2 L706.4 532.2 Z" fill="#a8a8a8"/>
 <path class="w" style="stroke:#d0d0d0;stroke-width:1.1" d="M53.8 552.6 H67 V555.4 H53.8 Z M53.8 555.4 V563.4 H59 M55.8 558.4 H58.6 M55.8 561 H58"/>
 <circle class="w" style="stroke:#d0d0d0;stroke-width:1.1" cx="63.4" cy="560.2" r="3.4"/><circle cx="63.4" cy="560.2" r="1.3" fill="#d0d0d0"/>
 <circle class="w" style="stroke:#d0d0d0;stroke-width:1.1" cx="88.4" cy="553" r="1.5"/>
 <path class="w" style="stroke:#d0d0d0;stroke-width:1.1" d="M83.2 555.4 L86.6 556.6 H90.2 L93.6 555.4 M86.6 556.6 V560 L84.6 564 M90.2 556.6 V559 M88.4 560.4 L90 563.6 M91 559.6 L95 563.6 M95 559.6 L91 563.6"/>
 <path class="g" style="stroke:#8a8a8a;stroke-width:1.1" d="M456.6 552 H467.8 V563 H456.6 Z M460.3 552 V563 M464.1 552 V563 M456.6 555.7 H467.8 M456.6 559.4 H467.8"/>
 <path class="g" style="stroke:#8a8a8a;stroke-width:1.1" d="M493.8 552 H506 V563 H493.8 Z M496.8 554.4 H503 V563 H496.8 Z M498.4 556.8 H501.4 M498.4 558.8 H501.4 M498.4 560.8 H501.4"/>
 <path class="g" style="stroke:#8a8a8a;stroke-width:1.1" d="M530.4 552 H542.6 V563 H530.4 Z M530.4 558.6 H538.6 V552 M534.4 552 V558.6"/>
 <path d="M560.6 557.6 H566.6 M668.4 557.6 H675 M671.7 554.2 V561" stroke="#8a8a8a" stroke-width="1.1" fill="none"/>
 <path d="M572.2 557.5 H663" stroke="#c8c8c8" stroke-width="1.3" fill="none"/>
 <path d="M617.4 554.4 V560.4" stroke="#d8d8d8" stroke-width="1.3" fill="none"/>
</svg>
<span class="t" style="left:109px;top:9px;font-size:13px;color:#e8e8e8;-webkit-text-stroke:0.25px currentColor;transform:translate(0.59px,0.00px) scaleX(0.9170);">Sheet1</span>
<span class="t" style="left:169px;top:5px;font-size:13px;color:#000;-webkit-text-stroke:0.12px currentColor;transform:translate(0.98px,0.80px) scaleX(0.9681);">Sheet2</span>
<span class="t" style="left:10px;top:35px;font-size:9.8px;color:#e6e6e6;-webkit-text-stroke:0.15px currentColor;transform:translate(0.54px,0.50px) scaleX(0.9156);">Edit</span>
<span class="t" style="left:98px;top:35px;font-size:9.6px;color:#ececec;font-weight:700;-webkit-text-stroke:0.12px currentColor;transform:translate(0.96px,0.40px) scaleX(1.0051);">Accessibility: Investigate</span>
<span class="t" style="left:686px;top:35px;font-size:9.8px;color:#8a8a8a;transform:translate(0.62px,0.60px) scaleX(0.9708);">100%</span>
</footer>

</div></body></html>
